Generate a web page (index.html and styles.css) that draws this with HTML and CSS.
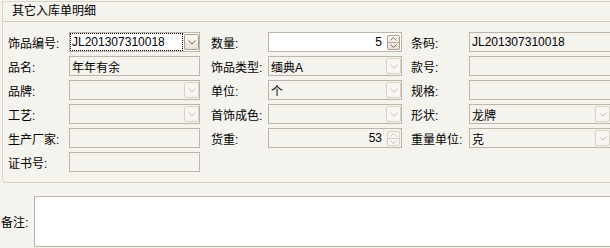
FILE: index.html
```html
<!DOCTYPE html>
<html lang="zh-CN">
<head>
<meta charset="utf-8">
<title>其它入库单明细</title>
<link rel="stylesheet" href="styles.css">
</head>
<body>
<div class="page">
  <div class="groupbox">
    <div class="gb-header">其它入库单明细</div>
    <div class="gb-body">
      <div class="lbl">饰品编号:</div>
      <div class="field white">
        <div class="focus">JL201307310018</div>
        <div class="dd on"><svg width="8" height="5" viewBox="0 0 8 5"><polyline points="0.5,0.5 4,4 7.5,0.5"/></svg></div>
      </div>
      <div class="lbl c2">数量:</div>
      <div class="field white">
        <div class="val num">5</div>
        <div class="spin on">
          <div class="sp"><svg width="7" height="4" viewBox="0 0 7 4"><polyline points="0.5,3.5 3.5,0.5 6.5,3.5"/></svg></div>
          <div class="sp"><svg width="7" height="4" viewBox="0 0 7 4"><polyline points="0.5,0.5 3.5,3.5 6.5,0.5"/></svg></div>
        </div>
      </div>
      <div class="lbl c3">条码:</div>
      <div class="field edge"><div class="val">JL201307310018</div></div>

      <div class="lbl">品名:</div>
      <div class="field"><div class="val">年年有余</div></div>
      <div class="lbl c2">饰品类型:</div>
      <div class="field">
        <div class="val">缅典A</div>
        <div class="dd"><svg width="8" height="5" viewBox="0 0 8 5"><polyline points="0.5,0.5 4,4 7.5,0.5"/></svg></div>
      </div>
      <div class="lbl c3">款号:</div>
      <div class="field edge"><div class="val"></div></div>

      <div class="lbl">品牌:</div>
      <div class="field">
        <div class="val"></div>
        <div class="dd"><svg width="8" height="5" viewBox="0 0 8 5"><polyline points="0.5,0.5 4,4 7.5,0.5"/></svg></div>
      </div>
      <div class="lbl c2">单位:</div>
      <div class="field">
        <div class="val">个</div>
        <div class="dd"><svg width="8" height="5" viewBox="0 0 8 5"><polyline points="0.5,0.5 4,4 7.5,0.5"/></svg></div>
      </div>
      <div class="lbl c3">规格:</div>
      <div class="field edge"><div class="val"></div></div>

      <div class="lbl">工艺:</div>
      <div class="field">
        <div class="val"></div>
        <div class="dd"><svg width="8" height="5" viewBox="0 0 8 5"><polyline points="0.5,0.5 4,4 7.5,0.5"/></svg></div>
      </div>
      <div class="lbl c2">首饰成色:</div>
      <div class="field">
        <div class="val"></div>
        <div class="dd"><svg width="8" height="5" viewBox="0 0 8 5"><polyline points="0.5,0.5 4,4 7.5,0.5"/></svg></div>
      </div>
      <div class="lbl c3">形状:</div>
      <div class="field edge">
        <div class="val">龙牌</div>
        <div class="dd"><svg width="8" height="5" viewBox="0 0 8 5"><polyline points="0.5,0.5 4,4 7.5,0.5"/></svg></div>
      </div>

      <div class="lbl">生产厂家:</div>
      <div class="field"><div class="val"></div></div>
      <div class="lbl c2">货重:</div>
      <div class="field">
        <div class="val num">53</div>
        <div class="spin">
          <div class="sp"><svg width="7" height="4" viewBox="0 0 7 4"><polyline points="0.5,3.5 3.5,0.5 6.5,3.5"/></svg></div>
          <div class="sp"><svg width="7" height="4" viewBox="0 0 7 4"><polyline points="0.5,0.5 3.5,3.5 6.5,0.5"/></svg></div>
        </div>
      </div>
      <div class="lbl c3">重量单位:</div>
      <div class="field edge">
        <div class="val">克</div>
        <div class="dd"><svg width="8" height="5" viewBox="0 0 8 5"><polyline points="0.5,0.5 4,4 7.5,0.5"/></svg></div>
      </div>

      <div class="lbl">证书号:</div>
      <div class="field"><div class="val"></div></div>
    </div>
  </div>
  <div class="remark">
    <div class="rlbl">备注:</div>
    <div class="textarea"></div>
  </div>
</div>
</body>
</html>
```
FILE: styles.css
```css
html, body {
  margin: 0;
  padding: 0;
}
body {
  background: #f5f3ee;
  color: #000;
  font-family: "Liberation Sans", "Noto Sans CJK SC", sans-serif;
  font-size: 12px;
  width: 610px;
  height: 248px;
  overflow: hidden;
}
.page {
  padding-top: 1px;
}
.groupbox {
  margin-left: 2px;
  width: 608px;
  box-sizing: border-box;
  border: 1px solid #dcd4c6;
  border-right: none;
  border-radius: 0 0 0 4px;
}
.gb-header {
  height: 19px;
  line-height: 19px;
  padding-left: 9px;
  border-bottom: 1px solid #d6cdbe;
  white-space: nowrap;
}
.gb-body {
  display: grid;
  grid-template-columns: 61px 131px 68px 134px 67px 141px;
  grid-auto-rows: 20px;
  row-gap: 4px;
  padding: 10px 0 10px 5px;
}
.lbl {
  display: flex;
  align-items: center;
  white-space: nowrap;
}
.lbl.c2 { padding-left: 11px; }
.lbl.c3 { padding-left: 9px; }
.field {
  box-sizing: border-box;
  height: 20px;
  border: 1px solid #beb4a7;
  background: #f5f3ee;
  display: flex;
  align-items: center;
}
.field.edge { border-right: none; }
.field.white { background: #fff; }
.val {
  flex: 1;
  padding-left: 2px;
  white-space: nowrap;
  overflow: hidden;
}
.val.num {
  text-align: right;
  padding-left: 0;
}
.focus {
  flex: 1;
  align-self: stretch;
  box-sizing: border-box;
  border: 1px dotted #000;
  margin-right: 1px;
  padding-left: 1px;
  display: flex;
  align-items: center;
  white-space: nowrap;
  overflow: hidden;
}
.dd {
  flex: none;
  width: 15px;
  height: 16px;
  box-sizing: border-box;
  border: 1px solid #d8d1c6;
  border-radius: 2px;
  background: #f8f6f2;
  display: flex;
  align-items: center;
  justify-content: center;
}
.dd svg, .spin svg {
  fill: none;
  stroke: #cbc3b8;
  stroke-width: 1;
}
.dd.on {
  border-color: #ac9c8b;
  background: linear-gradient(#fcfbf8, #e8e1d5);
}
.dd.on svg, .spin.on svg {
  stroke: #7c6a58;
}
.spin {
  flex: none;
  width: 13px;
  height: 15px;
  box-sizing: border-box;
  margin: 0 1px 0 5px;
  border: 1px solid #d8d1c6;
  border-radius: 2px;
  background: #f8f6f2;
  display: flex;
  flex-direction: column;
}
.spin.on {
  border-color: #ac9c8b;
  background: linear-gradient(#fcfbf8, #e8e1d5);
}
.sp {
  flex: 1;
  display: flex;
  align-items: center;
  justify-content: center;
}
.sp + .sp {
  border-top: 1px solid #d8d1c6;
}
.spin.on .sp + .sp {
  border-top-color: #b8a999;
}
.remark {
  display: flex;
  align-items: center;
  margin-top: 13px;
  padding-left: 1px;
}
.rlbl {
  flex: none;
  width: 33px;
  white-space: nowrap;
}
.textarea {
  flex: none;
  width: 576px;
  height: 51px;
  box-sizing: border-box;
  border: 1px solid #bcb2a5;
  border-right: none;
  background: #fff;
}
```
